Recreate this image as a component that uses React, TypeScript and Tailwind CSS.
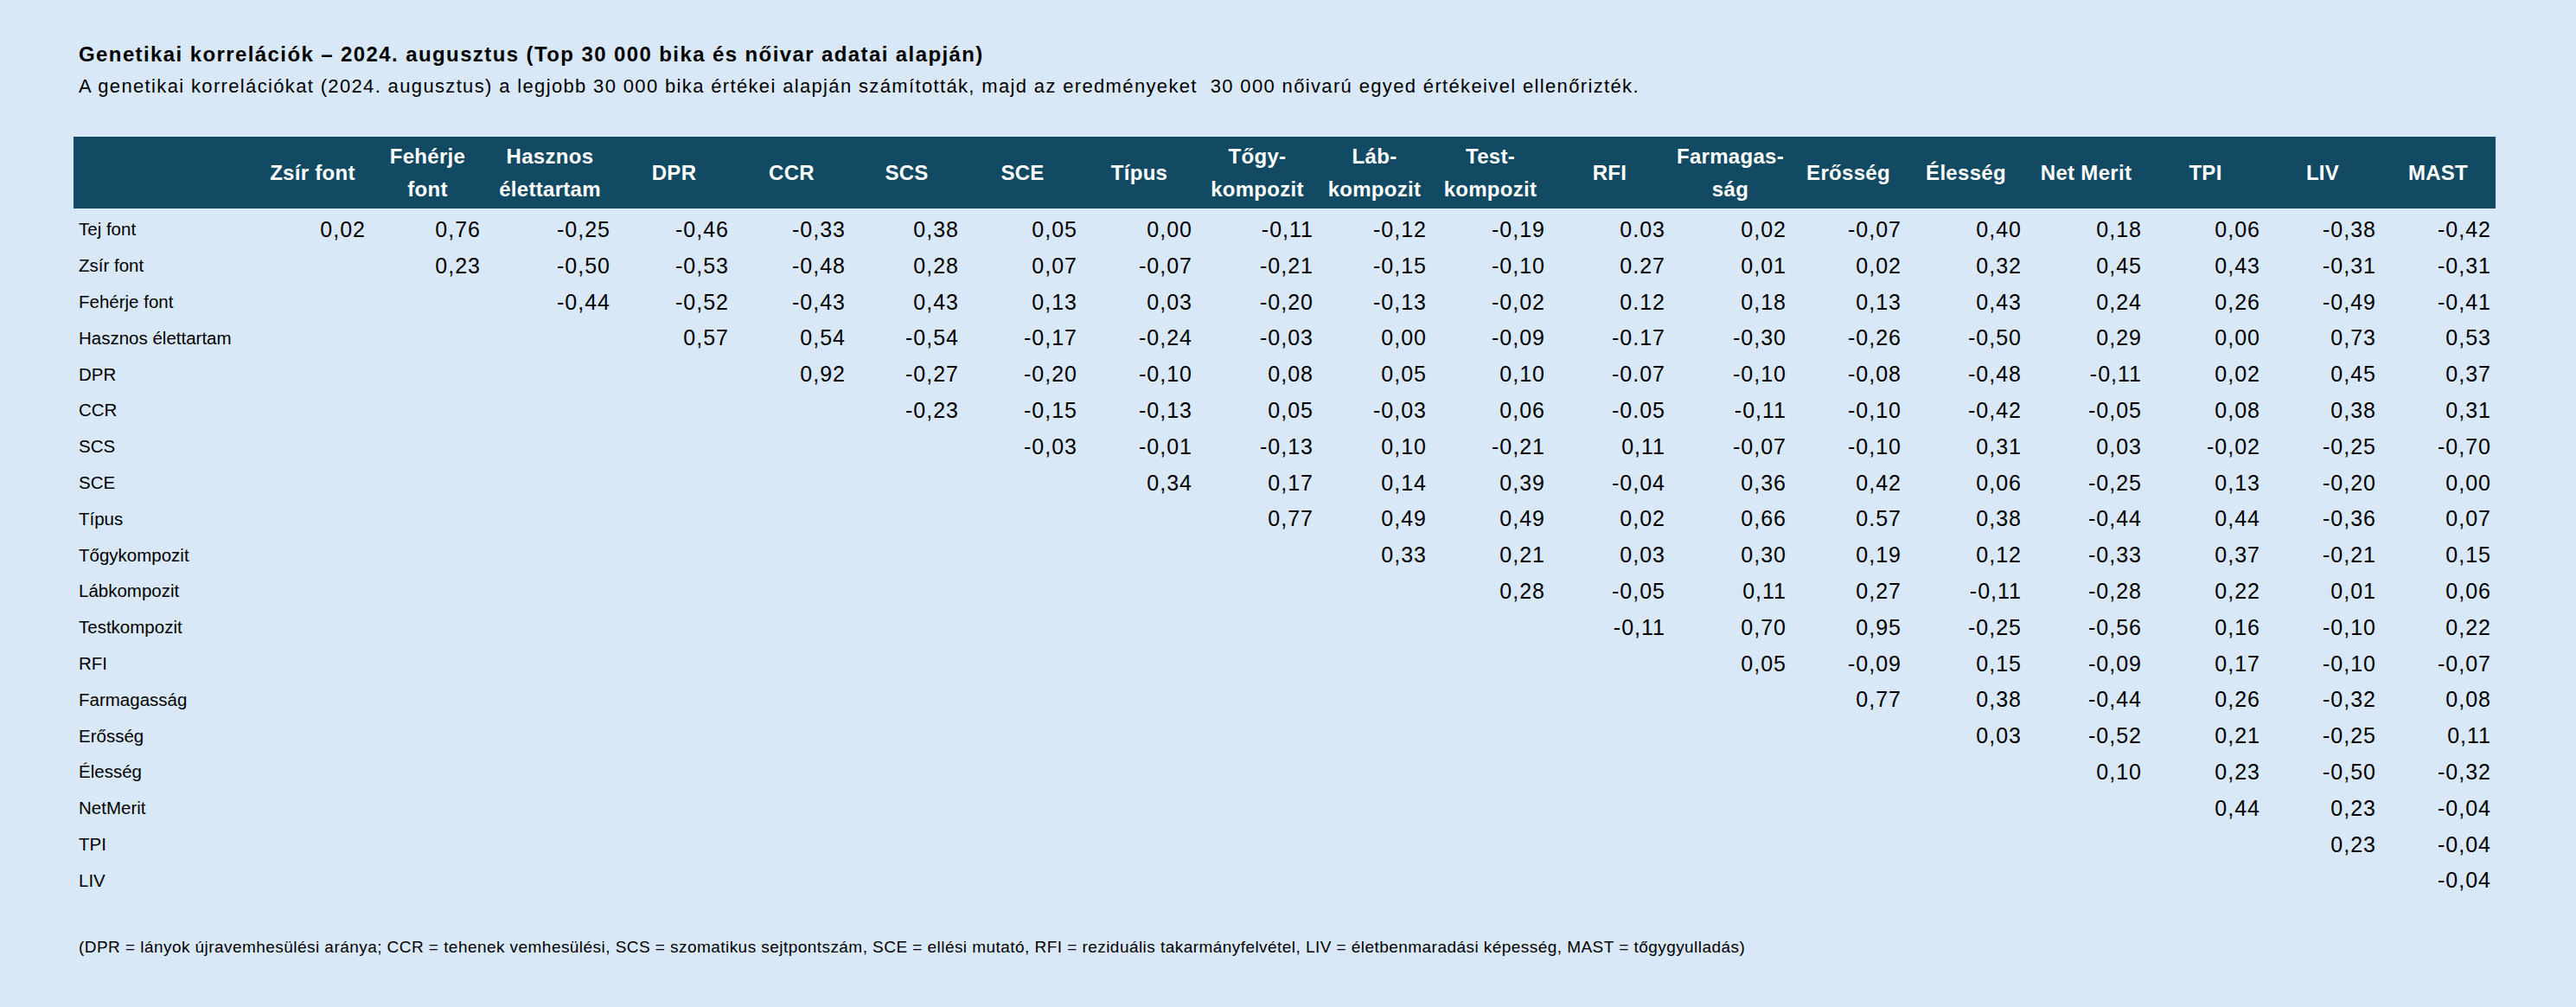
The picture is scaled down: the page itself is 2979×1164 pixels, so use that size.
import React from "react";

const GRID =
  "grid grid-cols-[210px_133px_133px_150px_137px_135px_131px_137px_133px_140px_131px_137px_139px_140px_133px_139px_139px_137px_134px_133px]";

const headers: string[][] = [
  ["Zsír font"],
  ["Fehérje", "font"],
  ["Hasznos", "élettartam"],
  ["DPR"],
  ["CCR"],
  ["SCS"],
  ["SCE"],
  ["Típus"],
  ["Tőgy-", "kompozit"],
  ["Láb-", "kompozit"],
  ["Test-", "kompozit"],
  ["RFI"],
  ["Farmagas-", "ság"],
  ["Erősség"],
  ["Élesség"],
  ["Net Merit"],
  ["TPI"],
  ["LIV"],
  ["MAST"],
];

const rows: { label: string; values: string[] }[] = [
  { label: "Tej font", values: ["0,02", "0,76", "-0,25", "-0,46", "-0,33", "0,38", "0,05", "0,00", "-0,11", "-0,12", "-0,19", "0.03", "0,02", "-0,07", "0,40", "0,18", "0,06", "-0,38", "-0,42"] },
  { label: "Zsír font", values: ["0,23", "-0,50", "-0,53", "-0,48", "0,28", "0,07", "-0,07", "-0,21", "-0,15", "-0,10", "0.27", "0,01", "0,02", "0,32", "0,45", "0,43", "-0,31", "-0,31"] },
  { label: "Fehérje font", values: ["-0,44", "-0,52", "-0,43", "0,43", "0,13", "0,03", "-0,20", "-0,13", "-0,02", "0.12", "0,18", "0,13", "0,43", "0,24", "0,26", "-0,49", "-0,41"] },
  { label: "Hasznos élettartam", values: ["0,57", "0,54", "-0,54", "-0,17", "-0,24", "-0,03", "0,00", "-0,09", "-0.17", "-0,30", "-0,26", "-0,50", "0,29", "0,00", "0,73", "0,53"] },
  { label: "DPR", values: ["0,92", "-0,27", "-0,20", "-0,10", "0,08", "0,05", "0,10", "-0.07", "-0,10", "-0,08", "-0,48", "-0,11", "0,02", "0,45", "0,37"] },
  { label: "CCR", values: ["-0,23", "-0,15", "-0,13", "0,05", "-0,03", "0,06", "-0.05", "-0,11", "-0,10", "-0,42", "-0,05", "0,08", "0,38", "0,31"] },
  { label: "SCS", values: ["-0,03", "-0,01", "-0,13", "0,10", "-0,21", "0,11", "-0,07", "-0,10", "0,31", "0,03", "-0,02", "-0,25", "-0,70"] },
  { label: "SCE", values: ["0,34", "0,17", "0,14", "0,39", "-0,04", "0,36", "0,42", "0,06", "-0,25", "0,13", "-0,20", "0,00"] },
  { label: "Típus", values: ["0,77", "0,49", "0,49", "0,02", "0,66", "0.57", "0,38", "-0,44", "0,44", "-0,36", "0,07"] },
  { label: "Tőgykompozit", values: ["0,33", "0,21", "0,03", "0,30", "0,19", "0,12", "-0,33", "0,37", "-0,21", "0,15"] },
  { label: "Lábkompozit", values: ["0,28", "-0,05", "0,11", "0,27", "-0,11", "-0,28", "0,22", "0,01", "0,06"] },
  { label: "Testkompozit", values: ["-0,11", "0,70", "0,95", "-0,25", "-0,56", "0,16", "-0,10", "0,22"] },
  { label: "RFI", values: ["0,05", "-0,09", "0,15", "-0,09", "0,17", "-0,10", "-0,07"] },
  { label: "Farmagasság", values: ["0,77", "0,38", "-0,44", "0,26", "-0,32", "0,08"] },
  { label: "Erősség", values: ["0,03", "-0,52", "0,21", "-0,25", "0,11"] },
  { label: "Élesség", values: ["0,10", "0,23", "-0,50", "-0,32"] },
  { label: "NetMerit", values: ["0,44", "0,23", "-0,04"] },
  { label: "TPI", values: ["0,23", "-0,04"] },
  { label: "LIV", values: ["-0,04"] },
];

export default function App() {
  return (
    <div className="w-[2979px] h-[1164px] bg-[#d9e8f6] text-black font-['Liberation_Sans',Arial,sans-serif] pl-[85px] pt-[49px] overflow-hidden">
      <div className="pl-[6px]">
        <div className="text-[24px] leading-[28px] font-bold tracking-[1.4px] whitespace-nowrap">
          Genetikai korrelációk – 2024. augusztus (Top 30 000 bika és nőivar adatai alapján)
        </div>
        <div className="mt-[9px] text-[22px] leading-[28px] tracking-[1.35px] whitespace-pre">
          A genetikai korrelációkat (2024. augusztus) a legjobb 30 000 bika értékei alapján számították, majd az eredményeket  30 000 nőivarú egyed értékeivel ellenőrizték.
        </div>
      </div>

      <div className="mt-[44px] w-[2801px]">
        <div className={`${GRID} h-[83px] bg-[#134a63] text-white font-bold text-[24px] leading-[38px] tracking-[0.3px]`}>
          <div />
          {headers.map((lines, i) => (
            <div key={i} className="flex flex-col items-center justify-center text-center whitespace-nowrap">
              {lines.map((l, j) => (
                <span key={j}>{l}</span>
              ))}
            </div>
          ))}
        </div>

        {rows.map((row, ri) => {
          const cells: string[] = [];
          for (let k = 0; k < ri; k++) cells.push("");
          cells.push(...row.values);
          return (
            <div key={ri} className={`${GRID} h-[41.8px]`}>
              <div className="flex items-center pl-[6px] pt-[6px] text-[20.5px] whitespace-nowrap">
                {row.label}
              </div>
              {cells.map((v, ci) => (
                <div
                  key={ci}
                  className="flex items-center justify-end pr-[5px] pt-[6px] text-[25px] tracking-[1px] whitespace-nowrap"
                >
                  {v}
                </div>
              ))}
            </div>
          );
        })}
      </div>

      <div className="mt-[48px] pl-[6px] text-[19px] leading-[24px] tracking-[0.45px] whitespace-nowrap">
        (DPR = lányok újravemhesülési aránya; CCR = tehenek vemhesülési, SCS = szomatikus sejtpontszám, SCE = ellési mutató, RFI = reziduális takarmányfelvétel, LIV = életbenmaradási képesség, MAST = tőgygyulladás)
      </div>
    </div>
  );
}
